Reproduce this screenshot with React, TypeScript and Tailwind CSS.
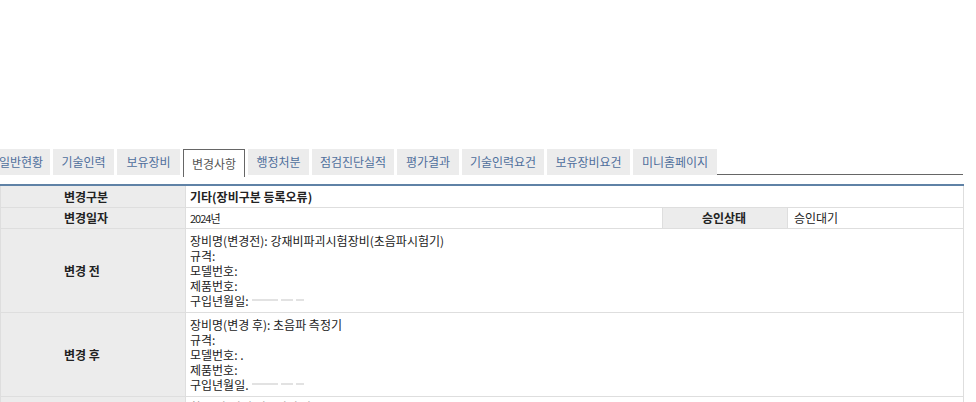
import React from 'react';

const tabs = [
  { label: '일반현황', w: 'w-[58px]' },
  { label: '기술인력', w: 'w-[61px]' },
  { label: '보유장비', w: 'w-[63px]' },
  { label: '변경사항', w: 'w-[62px]', active: true },
  { label: '행정처분', w: 'w-[61px]' },
  { label: '점검진단실적', w: 'w-[82px]' },
  { label: '평가결과', w: 'w-[62px]' },
  { label: '기술인력요건', w: 'w-[82px]' },
  { label: '보유장비요건', w: 'w-[83px]' },
  { label: '미니홈페이지', w: 'w-[84px]' },
];

function Blur({ w }: { w: string }) {
  return <span className={`inline-block h-[2px] align-middle bg-[#e2e2e2] ${w}`} />;
}

export default function App() {
  return (
    <div
      className="w-[976px] h-[402px] overflow-hidden bg-white text-[12px] text-[#222]"
      style={{ fontFamily: '"Noto Sans CJK KR", "Malgun Gothic", sans-serif' }}
    >
      <div className="h-[149px]" />
      {/* 탭 */}
      <div className="flex items-start h-[28px] -ml-[8px] w-[971px]">
        {tabs.map((t) =>
          t.active ? (
            <div
              key={t.label}
              className={`${t.w} h-[28px] flex items-center justify-center bg-white border border-b-0 border-[#666] text-[#555] mr-[3px]`}
            >
              {t.label}
            </div>
          ) : (
            <div
              key={t.label}
              className={`${t.w} h-[26px] flex items-center justify-center bg-[#ececec] text-[#4f6f9c] mr-[3px]`}
            >
              {t.label}
            </div>
          )
        )}
        <div className="flex-1 h-[26px] border-b border-[#666] -ml-[3px]" />
      </div>
      {/* 변경 내역 */}
      <table className="mt-[7px] w-[963px] border-collapse table-fixed border-t-2 border-t-[#5f82a6] leading-[15px]">
        <colgroup>
          <col className="w-[185px]" />
          <col className="w-[477px]" />
          <col className="w-[125px]" />
          <col className="w-[176px]" />
        </colgroup>
        <tbody>
          <tr className="h-[22px]">
            <th className="bg-[#ececec] border border-[#dedede] border-t-0 font-bold text-left pl-[63px]">변경구분</th>
            <td colSpan={3} className="border border-[#dedede] border-t-0 px-[4px] font-bold">
              기타(장비구분 등록오류)
            </td>
          </tr>
          <tr className="h-[21px]">
            <th className="bg-[#ececec] border border-[#dedede] font-bold text-left pl-[63px]">변경일자</th>
            <td className="border border-[#dedede] px-[4px]">
              <span className="tracking-[-1px] text-[11px]">2024년</span>
            </td>
            <th className="bg-[#ececec] border border-[#dedede] font-bold text-left pl-[39px]">승인상태</th>
            <td className="border border-[#dedede] px-[6px]">승인대기</td>
          </tr>
          <tr>
            <th className="bg-[#ececec] border border-[#dedede] font-bold text-left pl-[63px]">변경 전</th>
            <td colSpan={3} className="border border-[#dedede] px-[4px] py-[4px] h-[84px]">
              <div>장비명(변경전): 강재비파괴시험장비(초음파시험기)</div>
              <div>규격:</div>
              <div>모델번호:</div>
              <div>제품번호:</div>
              <div className="flex items-center gap-[3px]">
                구입년월일: <Blur w="w-[26px]" /> <Blur w="w-[12px]" /> <Blur w="w-[8px]" />
              </div>
            </td>
          </tr>
          <tr>
            <th className="bg-[#ececec] border border-[#dedede] font-bold text-left pl-[63px]">변경 후</th>
            <td colSpan={3} className="border border-[#dedede] px-[4px] py-[4px] h-[84px]">
              <div>장비명(변경 후): 초음파 측정기</div>
              <div>규격:</div>
              <div>모델번호: .</div>
              <div>제품번호:</div>
              <div className="flex items-center gap-[3px]">
                구입년월일. <Blur w="w-[26px]" /> <Blur w="w-[12px]" /> <Blur w="w-[8px]" />
              </div>
            </td>
          </tr>
          <tr>
            <th className="bg-[#ececec] border border-[#dedede]" />
            <td colSpan={3} className="border border-[#dedede] px-[4px] py-[2px] text-[#999]">
              항목 명(변경 전): 변경 사유
            </td>
          </tr>
        </tbody>
      </table>
    </div>
  );
}
